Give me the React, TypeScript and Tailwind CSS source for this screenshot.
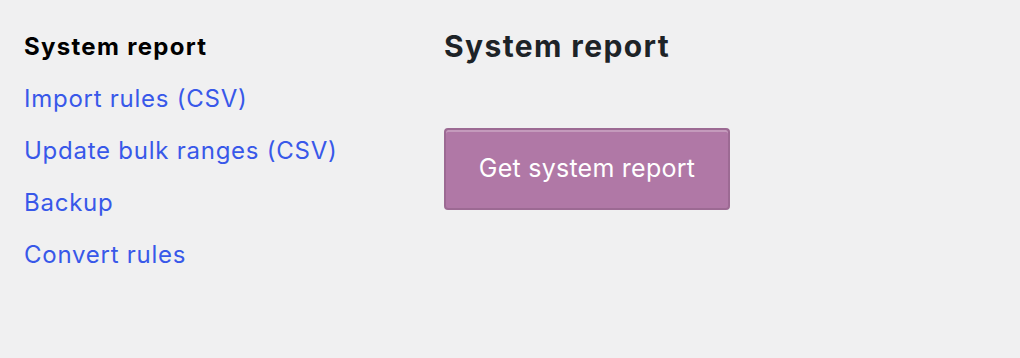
export default function App() {
  const links = ['Import rules (CSV)', 'Update bulk ranges (CSV)', 'Backup', 'Convert rules']

  return (
    <div
      className="w-full h-[358px] bg-[#f0f0f1] flex"
      style={{ fontFamily: 'Inter, "Liberation Sans", sans-serif' }}
    >
      <div className="w-[444px] pl-6 pt-[21px] flex flex-col">
        <div className="text-[24px] leading-[52px] font-bold tracking-[1.3px] text-black">System report</div>
        {links.map((l) => (
          <a key={l} href="#" className="text-[24px] leading-[52px] tracking-[0.75px] text-[#3858e9]">
            {l}
          </a>
        ))}
      </div>
      <div className="pt-[26px] flex flex-col items-start">
        <h1 className="text-[30px] leading-[40px] font-bold tracking-[1.4px] text-[#1d2327]">System report</h1>
        <button className="mt-[62px] w-[286px] h-[82px] rounded-[4px] bg-[#b078a6] border-2 border-[#9c6a93] shadow-[inset_0_2px_0_rgba(255,255,255,0.25)] text-white text-[25px] tracking-[0.25px]">
          Get system report
        </button>
      </div>
    </div>
  )
}
